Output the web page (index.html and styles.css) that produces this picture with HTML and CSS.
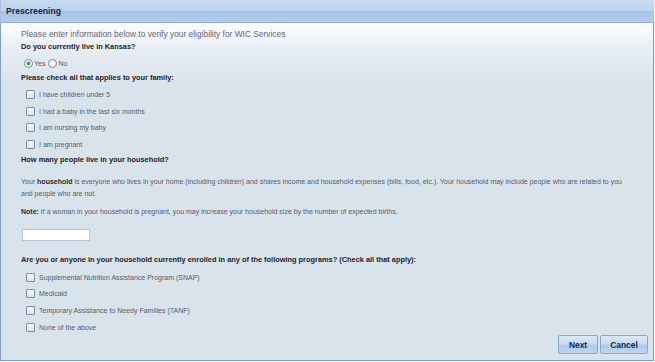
FILE: index.html
```html
<!DOCTYPE html>
<html lang="en">
<head>
  <meta charset="UTF-8" />
  <title>Prescreening</title>
  <link rel="stylesheet" href="styles.css">
</head>
<body>
  <div class="panel">
    <div class="panel-header">Prescreening</div>
    <div class="panel-body">
      <p class="intro">Please enter information below to verify your eligibility for WIC Services</p>

      <div class="question q-kansas">Do you currently live in Kansas?</div>
      <div class="radios">
        <label><input type="radio" name="kansas" checked> Yes</label>
        <label><input type="radio" name="kansas"> No</label>
      </div>

      <div class="question q-family">Please check all that applies to your family:</div>
      <div class="checks checks-family">
        <label><input type="checkbox"> I have children under 5</label>
        <label><input type="checkbox"> I had a baby in the last six months</label>
        <label><input type="checkbox"> I am nursing my baby</label>
        <label><input type="checkbox"> I am pregnant</label>
      </div>

      <div class="question q-people">How many people live in your household?</div>
      <p class="info">Your <strong>household</strong> is everyone who lives in your home (including children) and shares income and household expenses (bills, food, etc.). Your household may include people who are related to you and people who are not.</p>
      <p class="info note"><strong>Note:</strong> If a woman in your household is pregnant, you may increase your household size by the number of expected births.</p>
      <input type="text" class="size-input">

      <div class="question q-programs">Are you or anyone in your household currently enrolled in any of the following programs? (Check all that apply):</div>
      <div class="checks checks-programs">
        <label><input type="checkbox"> Supplemental Nutrition Assistance Program (SNAP)</label>
        <label><input type="checkbox"> Medicaid</label>
        <label><input type="checkbox"> Temporary Assistance to Needy Families (TANF)</label>
        <label><input type="checkbox"> None of the above</label>
      </div>

      <div class="actions">
        <button>Next</button>
        <button>Cancel</button>
      </div>
    </div>
  </div>
</body>
</html>
```

FILE: styles.css
```css
/* reset */
* {
  margin: 0;
  padding: 0;
  box-sizing: border-box;
}

body {
  font-family: "Liberation Sans", Arial, sans-serif;
  background-color: #eef3f8;
  width: 655px;
  height: 362px;
  overflow: hidden;
}

.panel {
  width: 654px;
  height: 361px;
  display: flex;
  flex-direction: column;
  border-bottom: 1px solid #7e9ecd;
}

/* title bar */
.panel-header {
  height: 23px;
  padding: 0 5px;
  line-height: 22px;
  font-size: 8.7px;
  font-weight: bold;
  color: #15273f;
  background: linear-gradient(to bottom, #c6daf1 0, #bcd3ee 48%, #a6c3e8 52%, #b5cdec 100%);
  border-bottom: 1px solid #8badda;
  border-left: 1px solid #a6bfe2;
}

.panel-body {
  flex: 1;
  position: relative;
  padding: 5px 20px 0 20px;
  border-left: 1px solid #7e9ecd;
  border-right: 1px solid #7e9ecd;
  background: linear-gradient(to bottom, #fdfefe 0, #e6ecf2 28px, #d9e3ec 60px, #d9e3ec 100%);
}

.intro {
  height: 12px;
  line-height: 12px;
  font-size: 8.4px;
  color: #66667c;
}

.question {
  height: 12px;
  line-height: 12px;
  font-size: 7.4px;
  font-weight: bold;
  color: #1e1e28;
}

.q-kansas { margin-top: 1px; }
.q-family { margin-top: 3px; }
.q-people { margin-top: 1.5px; }
.q-programs { margin-top: 12.7px; }

label {
  display: flex;
  align-items: center;
  font-size: 7px;
  color: #585a6c;
}

.radios {
  display: flex;
  height: 12px;
  margin-top: 4px;
  padding-left: 3px;
  gap: 3px;
}

.radios label {
  gap: 1px;
}

input[type="radio"] {
  appearance: none;
  width: 9px;
  height: 9px;
  border: 1px solid #7b8ba0;
  border-radius: 50%;
  background: radial-gradient(circle, #ffffff 0, #eef2f6 100%);
}

input[type="radio"]:checked {
  background: radial-gradient(circle, #2f9b3a 0, #49b24f 1.6px, #ffffff 2.4px, #eef2f6 100%);
}

.checks {
  padding-left: 5px;
}

.checks-family { margin-top: 2px; }
.checks-programs { margin-top: 2.8px; }

.checks label {
  height: 16.7px;
  gap: 4px;
}

input[type="checkbox"] {
  appearance: none;
  width: 9px;
  height: 9px;
  border: 1px solid #7f8da0;
  border-radius: 1px;
  background: linear-gradient(to bottom, #f6f8fa, #dfe5ec);
}

.info {
  font-size: 7px;
  line-height: 12px;
  color: #585a6c;
  margin-top: 10px;
}

.info strong {
  color: #2a2a36;
}

.note {
  margin-top: 6px;
}

.size-input {
  display: block;
  width: 68px;
  height: 12px;
  margin-top: 11px;
  margin-left: 1px;
  border: 1px solid #b9c5d3;
  background: #ffffff;
}

.actions {
  position: absolute;
  right: 5px;
  bottom: 6px;
  display: flex;
  gap: 2px;
}

button {
  height: 19px;
  padding: 0 8px;
  font-family: "Liberation Sans", Arial, sans-serif;
  font-size: 8.4px;
  font-weight: bold;
  color: #15274a;
  border: 1px solid #86a7d6;
  border-radius: 2px;
  background: linear-gradient(to bottom, #dbe8f8 0, #c9dcf4 45%, #afcbee 55%, #bcd5f2 100%);
}

button:first-child {
  width: 40px;
}

button:last-child {
  width: 48px;
}
```
